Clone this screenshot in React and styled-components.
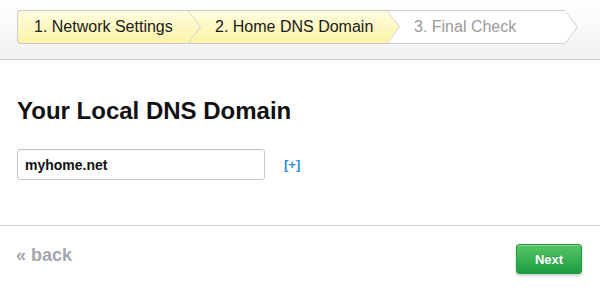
import React from "react";
import styled, { createGlobalStyle } from "styled-components";

const Global = createGlobalStyle`
  html, body { margin: 0; padding: 0; background: #fff; }
  body { font-family: "Liberation Sans", Arial, sans-serif; }
  * { box-sizing: border-box; }
`;

const Page = styled.div`
  width: 600px;
  height: 294px;
  display: flex;
  flex-direction: column;
  background: #fff;
  overflow: hidden;
`;

const Header = styled.header`
  height: 60px;
  flex: none;
  padding: 10px 17px 0;
  background: linear-gradient(#ffffff, #f1f1f1);
  border-bottom: 1px solid #cfcfcf;
`;

const Crumbs = styled.nav`
  display: flex;
  height: 34px;
`;

const Step = styled.div`
  position: relative;
  z-index: ${(p) => p.$z};
  width: ${(p) => p.$w}px;
  height: 34px;
  padding-left: ${(p) => (p.$first ? 16 : 27)}px;
  display: flex;
  align-items: center;
  font-size: 16px;
  color: ${(p) => (p.$done ? "#1a1a1a" : "#9a9a9a")};
  background: ${(p) =>
    p.$done ? "linear-gradient(#fffde0, #fbf3a6)" : "#ffffff"};
  border-top: 1px solid #cccccc;
  border-bottom: 1px solid #cccccc;
  border-left: ${(p) => (p.$first ? "1px solid #cccccc" : "none")};
  border-radius: ${(p) => (p.$first ? "4px 0 0 4px" : "0")};
  white-space: nowrap;

  &::before {
    content: "";
    position: absolute;
    top: -1px;
    right: -13px;
    width: 13px;
    height: 34px;
    background: #cccccc;
    clip-path: polygon(0 0, 100% 50%, 0 100%);
  }
  &::after {
    content: "";
    position: absolute;
    top: 0;
    right: -12px;
    width: 12px;
    height: 32px;
    background: ${(p) =>
      p.$done ? "linear-gradient(#fffde0, #fbf3a6)" : "#ffffff"};
    clip-path: polygon(0 0, 100% 50%, 0 100%);
  }
`;

const Main = styled.main`
  height: 166px;
  flex: none;
  padding: 37px 17px 0;
  border-bottom: 1px solid #cfcfcf;
`;

const Title = styled.h1`
  margin: 0 0 24px;
  font-family: "Liberation Sans", Arial, sans-serif;
  font-weight: 700;
  font-size: 24px;
  line-height: 28px;
  color: #111;
`;

const FieldRow = styled.div`
  display: flex;
  align-items: center;
  gap: 19px;
`;

const Input = styled.input`
  width: 248px;
  height: 31px;
  padding: 0 7px;
  border: 1px solid #c8c8c8;
  border-radius: 3px;
  font-family: "Liberation Sans", Arial, sans-serif;
  font-size: 14px;
  font-weight: 700;
  color: #111;
  background: #fff;
  outline: none;
  box-shadow: inset 0 1px 1px rgba(0, 0, 0, 0.04);
`;

const AddLink = styled.a`
  font-size: 13px;
  font-weight: 700;
  color: #2a8fd6;
  text-decoration: none;
  cursor: pointer;
`;

const Footer = styled.footer`
  display: flex;
  align-items: center;
  justify-content: space-between;
  padding: 18px 18px 0 16px;
`;

const Back = styled.a`
  font-size: 18px;
  font-weight: 700;
  color: #a4a7ad;
  text-decoration: none;
  cursor: pointer;
  margin: 0 0 8px;
`;

const NextButton = styled.button`
  width: 66px;
  height: 30px;
  border: 1px solid #1f9a3d;
  border-radius: 3px;
  background: linear-gradient(#55c664, #1d9d44);
  color: #fff;
  font-family: "Liberation Sans", Arial, sans-serif;
  font-size: 13px;
  font-weight: 700;
  box-shadow: 0 2px 3px rgba(0, 0, 0, 0.18), inset 0 1px 0 rgba(255, 255, 255, 0.25);
  text-shadow: 0 -1px 0 rgba(0, 0, 0, 0.15);
  cursor: pointer;
`;

const steps = [
  { label: "1. Network Settings", w: 171, done: true },
  { label: "2. Home DNS Domain", w: 199, done: true },
  { label: "3. Final Check", w: 178, done: false },
];

export default function App() {
  return (
    <Page>
      <Global />
      <Header>
        <Crumbs>
          {steps.map((s, i) => (
            <Step
              key={s.label}
              $w={s.w}
              $done={s.done}
              $first={i === 0}
              $z={steps.length - i}
            >
              {s.label}
            </Step>
          ))}
        </Crumbs>
      </Header>
      <Main>
        <Title>Your Local DNS Domain</Title>
        <FieldRow>
          <Input defaultValue="myhome.net" />
          <AddLink>[+]</AddLink>
        </FieldRow>
      </Main>
      <Footer>
        <Back>« back</Back>
        <NextButton>Next</NextButton>
      </Footer>
    </Page>
  );
}
